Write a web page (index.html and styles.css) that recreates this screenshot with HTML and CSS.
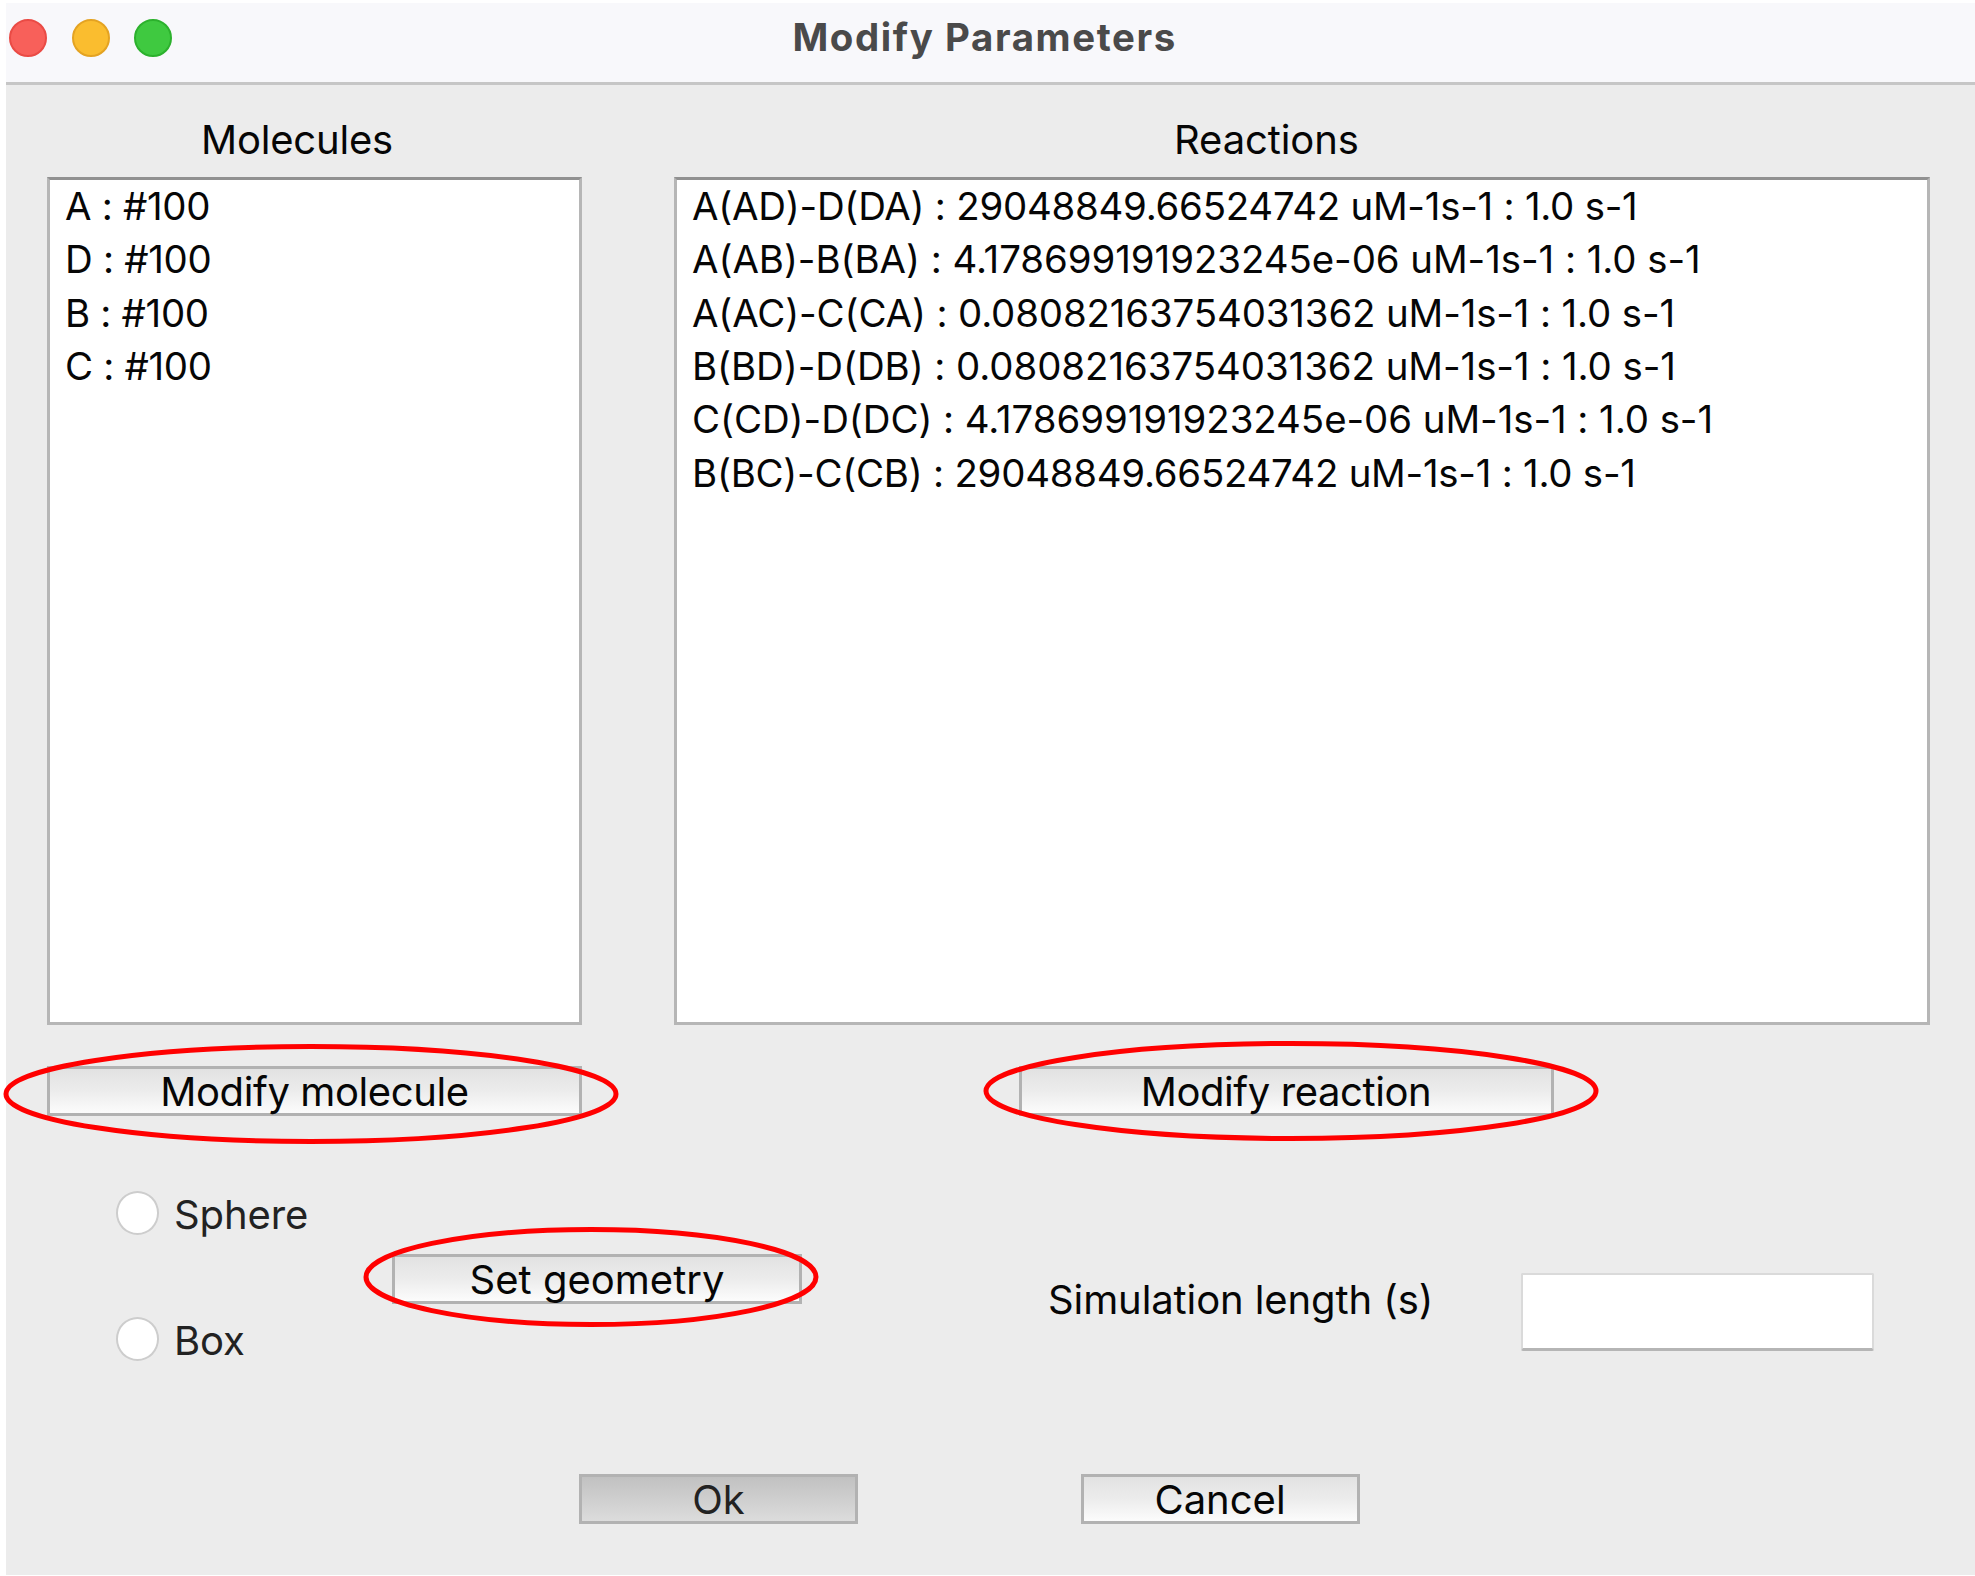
FILE: index.html
```html
<!DOCTYPE html>
<html lang="en">
<head>
<meta charset="utf-8">
<title>Modify Parameters</title>
<link rel="stylesheet" href="styles.css">
</head>
<body>
<main class="window">
  <header class="titlebar">
    <div class="lights">
      <i class="light close"></i><i class="light minimize"></i><i class="light zoom"></i>
    </div>
    <h1 class="title">Modify Parameters</h1>
  </header>

  <section class="panels">
    <div class="panel molecules">
      <h2 class="heading">Molecules</h2>
      <ul class="list">
        <li>A : #100</li>
        <li>D : #100</li>
        <li>B : #100</li>
        <li>C : #100</li>
      </ul>
      <div class="callout">
        <button class="btn wide">Modify molecule</button>
        <svg class="ring ring-molecule" width="616" height="102" viewBox="0 0 616 102"><ellipse cx="308" cy="51" rx="305" ry="47.5"/></svg>
      </div>
    </div>
    <div class="panel reactions">
      <h2 class="heading">Reactions</h2>
      <ul class="list">
        <li class="tight">A(AD)-D(DA) : 29048849.66524742 uM-1s-1 : 1.0 s-1</li>
        <li>A(AB)-B(BA) : 4.178699191923245e-06 uM-1s-1 : 1.0 s-1</li>
        <li class="snug">A(AC)-C(CA) : 0.08082163754031362 uM-1s-1 : 1.0 s-1</li>
        <li>B(BD)-D(DB) : 0.08082163754031362 uM-1s-1 : 1.0 s-1</li>
        <li>C(CD)-D(DC) : 4.178699191923245e-06 uM-1s-1 : 1.0 s-1</li>
        <li class="tight">B(BC)-C(CB) : 29048849.66524742 uM-1s-1 : 1.0 s-1</li>
      </ul>
      <div class="callout">
        <button class="btn wide">Modify reaction</button>
        <svg class="ring ring-reaction" width="616" height="102" viewBox="0 0 616 102"><ellipse cx="308" cy="51" rx="305" ry="47.5"/></svg>
      </div>
    </div>
  </section>

  <section class="settings">
    <div class="radios">
      <label class="radio"><i class="dot"></i><span>Sphere</span></label>
      <label class="radio"><i class="dot"></i><span>Box</span></label>
    </div>
    <div class="callout geometry">
      <button class="btn">Set geometry</button>
      <svg class="ring ring-geometry" width="456" height="102" viewBox="0 0 456 102"><ellipse cx="228" cy="51" rx="225" ry="47.5"/></svg>
    </div>
    <label class="length-label" for="length">Simulation length (s)</label>
    <input class="length" id="length" type="text">
  </section>

  <footer class="actions">
    <button class="btn action pressed">Ok</button>
    <button class="btn action">Cancel</button>
  </footer>
</main>
</body>
</html>
```
FILE: styles.css
```css
* { box-sizing: border-box; }

body {
  margin: 0;
  padding: 3px 0 1px 6px;
  height: 1576px;
  background: #fff;
  font-family: Inter, "Liberation Sans", sans-serif;
  font-size: 40px;
  font-weight: 430;
  font-feature-settings: "calt" 0;
  line-height: 50px;
  color: #060606;
}

.window { height: 1572px; background: #ececec; }

.titlebar {
  display: flex;
  height: 82px;
  background: #f8f8fb;
  border-bottom: 3px solid #c6c6c6;
}

.lights { display: flex; gap: 24.5px; padding: 16px 0 0 3px; }
.light { width: 38px; height: 38px; border-radius: 50%; border: 2px solid; }
.close { background: #f8605a; border-color: #ea4b45; }
.minimize { background: #fabd2f; border-color: #e4a322; }
.zoom { background: #3fc940; border-color: #2cb12d; }

.title {
  margin: 9px 0 0 620.5px;
  font-size: 38.4px;
  font-weight: 700;
  letter-spacing: 1.6px;
  color: #4a4a4a;
}

.panels { display: flex; gap: 92px; padding: 30px 0 0 41px; }
.molecules { width: 535px; }
.reactions { width: 1256px; }

.heading { margin: 0 0 11.5px; font-size: 40px; font-weight: inherit; letter-spacing: -.2px; }
.molecules .heading { padding-left: 154px; }
.reactions .heading { padding-left: 500px; letter-spacing: -.1px; }

.list {
  margin: 0 0 41px;
  padding: .5px 0 0 15px;
  height: 848.5px;
  list-style: none;
  background: #fff;
  border: 3px solid #b6b6b6;
  border-top-color: #919191;
  font-size: 38.4px;
  line-height: 53.35px;
  letter-spacing: -.05px;
  white-space: nowrap;
}
.molecules .list { letter-spacing: -.3px; }
.reactions .tight { letter-spacing: -.24px; }
.reactions .snug { letter-spacing: -.13px; }

.callout { position: relative; width: fit-content; }
.reactions .callout { margin-left: 344.5px; }

.btn {
  display: block;
  width: 410px;
  height: 50px;
  padding: 1px 0 0;
  border: 3px solid #b2b2b2;
  border-radius: 0;
  background: linear-gradient(#e2e2e2, #ececec 50%, #fcfcfc);
  font: inherit;
  font-feature-settings: inherit;
  line-height: 43px;
  color: #060606;
}
.wide { width: 535px; letter-spacing: -.4px; }

.ring { position: absolute; overflow: visible; fill: none; stroke: #f00; stroke-width: 5px; }
.ring-molecule { left: -44px; top: -23px; }
.ring-reaction { left: -35.5px; top: -26px; }
.ring-geometry { left: -29px; top: -28px; }

.settings { display: flex; align-items: flex-start; height: 170px; margin-top: 74.5px; padding-left: 109.5px; }
.radios { display: flex; flex-direction: column; gap: 82px; width: 276.5px; color: #222; }
.radio { display: flex; gap: 15px; height: 44px; }
.radio span { margin-top: -1px; letter-spacing: -.1px; }
.dot { width: 43.5px; height: 44px; border-radius: 50%; background: #fff; border: 2px solid #cdcdcd; }
.geometry { margin-top: 63.5px; }
.length-label { width: 473px; margin: 84px 0 0 246px; letter-spacing: -.1px; }
.length {
  width: 353px;
  height: 78px;
  margin-top: 82px;
  padding: 0 12px;
  font: inherit;
  background: #fff;
  border: 2px solid #dadada;
  border-bottom: 3px solid #b5b5b5;
  border-radius: 2px;
}

.actions { display: flex; gap: 222.5px; margin-top: 113.5px; padding-left: 573px; }
.action { width: 279px; }
.pressed { background: linear-gradient(#c1c1c1, #dcdcdc); color: #222; }
```
